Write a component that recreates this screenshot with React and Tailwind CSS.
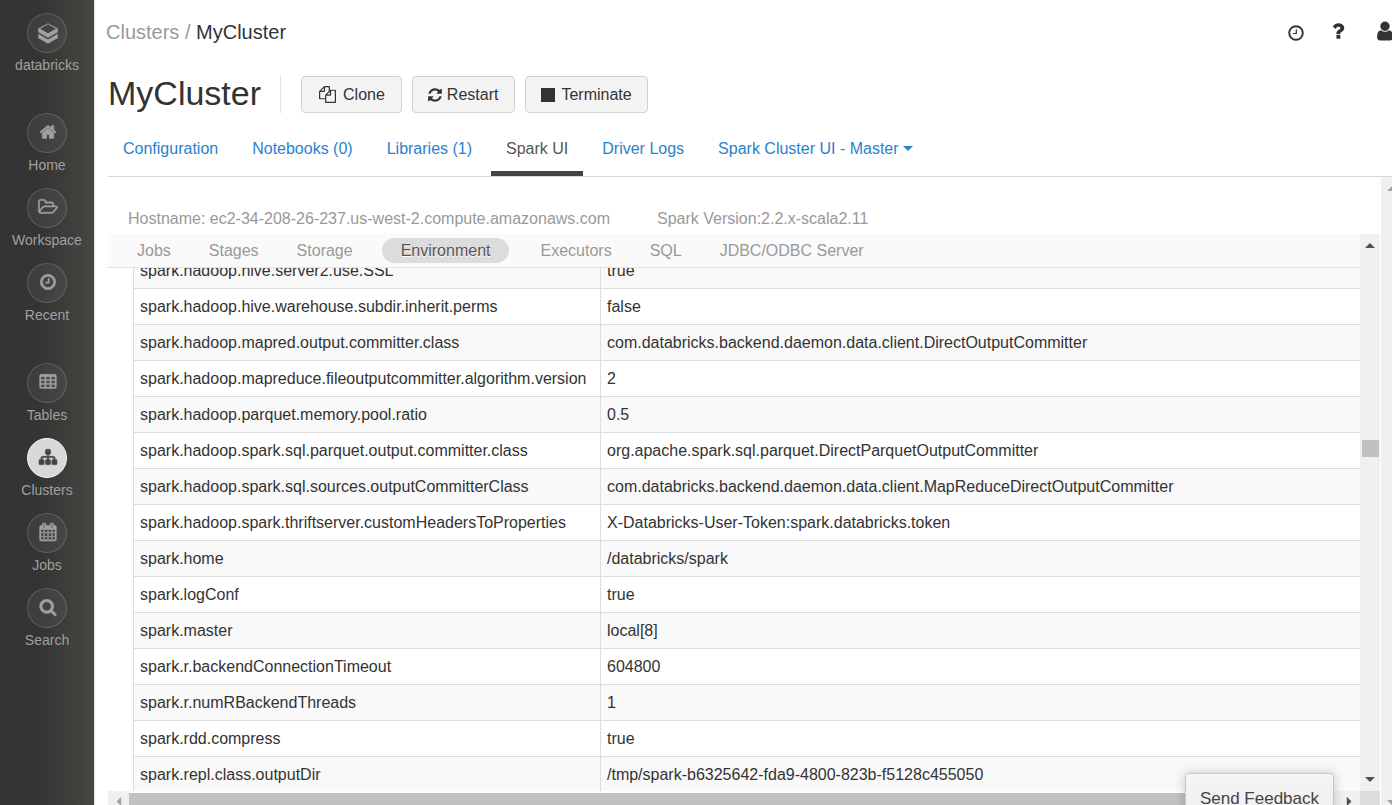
import React, { useState } from "react";

const ICONS = {
  home: "M1472 992v480q0 26-19 45t-45 19h-384v-384h-256v384h-384q-26 0-45-19t-19-45v-480q0-1 .5-3t.5-3l575-474 575 474q1 2 1 6zm223-69l-62 74q-8 9-21 11h-3q-13 0-21-7l-692-577-692 577q-12 8-24 7-13-2-21-11l-62-74q-8-10-7-23.5t11-21.5l719-599q32-26 76-26t76 26l244 204v-195q0-14 9-23t23-9h192q14 0 23 9t9 23v408l219 182q10 8 11 21.5t-7 23.5z",
  folder: "M1717 931q0-35-53-35h-1088q-40 0-85.5 21.5t-71.5 52.5l-294 363q-18 24-18 40 0 35 53 35h1088q40 0 86-22t71-53l294-363q18-22 18-39zm-1141-163h768v-160q0-40-28-68t-68-28h-576q-40 0-68-28t-28-68v-64q0-40-28-68t-68-28h-320q-40 0-68 28t-28 68v853l256-315q44-53 116-87.5t140-34.5zm1269 163q0 62-46 120l-295 363q-43 53-116 87.5t-140 34.5h-1088q-92 0-158-66t-66-158v-960q0-92 66-158t158-66h320q92 0 158 66t66 158v32h544q92 0 158 66t66 158v160h192q54 0 99 24.5t67 70.5q15 32 15 68z",
  clock: "M1024 544v448q0 14-9 23t-23 9h-320q-14 0-23-9t-9-23v-64q0-14 9-23t23-9h224v-352q0-14 9-23t23-9h64q14 0 23 9t9 23zm416 352q0-148-73-273t-198-198-273-73-273 73-198 198-73 273 73 273 198 198 273 73 273-73 198-198 73-273zm224 0q0 209-103 385.5t-279.5 279.5-385.5 103-385.5-103-279.5-279.5-103-385.5 103-385.5 279.5-279.5 385.5-103 385.5 103 279.5 279.5 103 385.5z",
  table: "M576 1376v-192q0-14-9-23t-23-9h-320q-14 0-23 9t-9 23v192q0 14 9 23t23 9h320q14 0 23-9t9-23zm0-384v-192q0-14-9-23t-23-9h-320q-14 0-23 9t-9 23v192q0 14 9 23t23 9h320q14 0 23-9t9-23zm512 384v-192q0-14-9-23t-23-9h-320q-14 0-23 9t-9 23v192q0 14 9 23t23 9h320q14 0 23-9t9-23zm-512-768v-192q0-14-9-23t-23-9h-320q-14 0-23 9t-9 23v192q0 14 9 23t23 9h320q14 0 23-9t9-23zm512 384v-192q0-14-9-23t-23-9h-320q-14 0-23 9t-9 23v192q0 14 9 23t23 9h320q14 0 23-9t9-23zm512 384v-192q0-14-9-23t-23-9h-320q-14 0-23 9t-9 23v192q0 14 9 23t23 9h320q14 0 23-9t9-23zm-512-768v-192q0-14-9-23t-23-9h-320q-14 0-23 9t-9 23v192q0 14 9 23t23 9h320q14 0 23-9t9-23zm512 384v-192q0-14-9-23t-23-9h-320q-14 0-23 9t-9 23v192q0 14 9 23t23 9h320q14 0 23-9t9-23zm0-384v-192q0-14-9-23t-23-9h-320q-14 0-23 9t-9 23v192q0 14 9 23t23 9h320q14 0 23-9t9-23zm128-320v1088q0 66-47 113t-113 47h-1344q-66 0-113-47t-47-113v-1088q0-66 47-113t113-47h1344q66 0 113 47t47 113z",
  sitemap: "M1792 1248v320q0 40-28 68t-68 28h-320q-40 0-68-28t-28-68v-320q0-40 28-68t68-28h96v-192h-512v192h96q40 0 68 28t28 68v320q0 40-28 68t-68 28h-320q-40 0-68-28t-28-68v-320q0-40 28-68t68-28h96v-192h-512v192h96q40 0 68 28t28 68v320q0 40-28 68t-68 28h-320q-40 0-68-28t-28-68v-320q0-40 28-68t68-28h96v-192q0-52 38-90t90-38h512v-192h-96q-40 0-68-28t-28-68v-320q0-40 28-68t68-28h320q40 0 68 28t28 68v320q0 40-28 68t-68 28h-96v192h512q52 0 90 38t38 90v192h96q40 0 68 28t28 68z",
  calendar: "M192 1664h288v-288h-288v288zm352 0h320v-288h-320v288zm-352-352h288v-320h-288v320zm352 0h320v-320h-320v320zm-352-384h288v-288h-288v288zm736 736h320v-288h-320v288zm-384-736h320v-288h-320v288zm768 736h288v-288h-288v288zm-384-352h320v-320h-320v320zm-352-864v-288q0-13-9.5-22.5t-22.5-9.5h-64q-13 0-22.5 9.5t-9.5 22.5v288q0 13 9.5 22.5t22.5 9.5h64q13 0 22.5-9.5t9.5-22.5zm736 864h288v-320h-288v320zm-384-384h320v-288h-320v288zm384 0h288v-288h-288v288zm32-480v-288q0-13-9.5-22.5t-22.5-9.5h-64q-13 0-22.5 9.5t-9.5 22.5v288q0 13 9.5 22.5t22.5 9.5h64q13 0 22.5-9.5t9.5-22.5zm384-64v1280q0 52-38 90t-90 38h-1408q-52 0-90-38t-38-90v-1280q0-52 38-90t90-38h128v-96q0-66 47-113t113-47h64q66 0 113 47t47 113v96h384v-96q0-66 47-113t113-47h64q66 0 113 47t47 113v96h128q52 0 90 38t38 90z",
  search: "M1216 832q0-185-131.5-316.5t-316.5-131.5-316.5 131.5-131.5 316.5 131.5 316.5 316.5 131.5 316.5-131.5 131.5-316.5zm512 832q0 52-38 90t-90 38q-54 0-90-38l-343-342q-179 124-399 124-143 0-273.5-55.5t-225-150-150-225-55.5-273.5 55.5-273.5 150-225 225-150 273.5-55.5 273.5 55.5 225 150 150 225 55.5 273.5q0 220-124 399l343 343q37 37 37 90z",
  copy: "M1696 384q40 0 68 28t28 68v1216q0 40-28 68t-68 28h-960q-40 0-68-28t-28-68v-288h-544q-40 0-68-28t-28-68v-672q0-40 20-88t48-76l408-408q28-28 76-48t88-20h416q40 0 68 28t28 68v328q68-40 128-40h416zm-544 213l-299 299h299v-299zm-640-384l-299 299h299v-299zm196 647l316-316v-416h-384v416q0 40-28 68t-68 28h-416v640h512v-256q0-40 20-88t48-76zm956 804v-1152h-384v416q0 40-28 68t-68 28h-416v640h896z",
  refresh: "M1639 1056q0 5-1 7-64 268-268 434.5t-478 166.5q-146 0-282.5-55t-243.5-157l-129 129q-19 19-45 19t-45-19-19-45v-448q0-26 19-45t45-19h448q26 0 45 19t19 45-19 45l-137 137q71 66 161 102t187 36q134 0 250-65t186-179q11-17 53-117 8-23 30-23h192q13 0 22.5 9.5t9.5 22.5zm25-800v448q0 26-19 45t-45 19h-448q-26 0-45-19t-19-45 19-45l138-138q-148-137-349-137-134 0-250 65t-186 179q-11 17-53 117-8 23-30 23h-199q-13 0-22.5-9.5t-9.5-22.5v-7q65-268 270-434.5t480-166.5q146 0 284 55.5t245 156.5l130-129q19-19 45-19t45 19 19 45z",
  question: "M1088 1256v240q0 16-12 28t-28 12h-240q-16 0-28-12t-12-28v-240q0-16 12-28t28-12h240q16 0 28 12t12 28zm316-600q0 54-15.5 101t-35 76.5-55 59.5-57.5 43.5-61 35.5q-41 23-68.5 65t-27.5 67q0 17-12 32.5t-28 15.5h-240q-15 0-25.5-18.5t-10.5-37.5v-45q0-83 65-156.5t143-108.5q59-27 84-56t25-76q0-42-46.5-74t-107.5-32q-65 0-108 29-35 25-107 115-13 16-31 16-12 0-25-8l-164-125q-13-10-15.5-25t5.5-28q160-266 464-266 80 0 161 31t146 83 106 127.5 41 158.5z",
  user: "M1536 1399q0 109-62.5 187t-150.5 78h-854q-88 0-150.5-78t-62.5-187q0-85 8.5-160.5t31.5-152 58.5-131 94-89 134.5-34.5q131 128 313 128t313-128q76 0 134.5 34.5t94 89 58.5 131 31.5 152 8.5 160.5zm-256-887q0 159-112.5 271.5t-271.5 112.5-271.5-112.5-112.5-271.5 112.5-271.5 271.5-112.5 271.5 112.5 112.5 271.5z",
};

function Icon({ name, className, weight = 0 }) {
  return (
    <svg
      viewBox="0 0 1792 1792"
      fill="currentColor"
      stroke="currentColor"
      strokeWidth={weight}
      aria-hidden="true"
      className={`shrink-0 overflow-visible ${className}`}
    >
      <path d={ICONS[name]} />
    </svg>
  );
}

function BricksLogo() {
  return (
    <svg viewBox="0 0 60 64" fill="currentColor" aria-hidden="true" className="w-5 h-[21px] ml-0.5">
      <path fillRule="evenodd" d="M0 17L30 1L60 17V28L30 45L0 28ZM6 17.5L30 31L54 17.5L30 4Z" />
      <path d="M0 33L30 50L60 33V46L30 63L0 46Z" />
    </svg>
  );
}

const navGroups = [
  [{ label: "databricks" }],
  [
    { label: "Home", icon: "home" },
    { label: "Workspace", icon: "folder" },
    { label: "Recent", icon: "clock" },
  ],
  [
    { label: "Tables", icon: "table" },
    { label: "Clusters", icon: "sitemap" },
    { label: "Jobs", icon: "calendar" },
    { label: "Search", icon: "search" },
  ],
];

const tabs = ["Configuration", "Notebooks (0)", "Libraries (1)", "Spark UI", "Driver Logs"];

const sparkTabs = ["Jobs", "Stages", "Storage", "Environment", "Executors", "SQL", "JDBC/ODBC Server"];

const properties = [
  ["spark.hadoop.hive.server2.use.SSL", "true"],
  ["spark.hadoop.hive.warehouse.subdir.inherit.perms", "false"],
  ["spark.hadoop.mapred.output.committer.class", "com.databricks.backend.daemon.data.client.DirectOutputCommitter"],
  ["spark.hadoop.mapreduce.fileoutputcommitter.algorithm.version", "2"],
  ["spark.hadoop.parquet.memory.pool.ratio", "0.5"],
  ["spark.hadoop.spark.sql.parquet.output.committer.class", "org.apache.spark.sql.parquet.DirectParquetOutputCommitter"],
  ["spark.hadoop.spark.sql.sources.outputCommitterClass", "com.databricks.backend.daemon.data.client.MapReduceDirectOutputCommitter"],
  ["spark.hadoop.spark.thriftserver.customHeadersToProperties", "X-Databricks-User-Token:spark.databricks.token"],
  ["spark.home", "/databricks/spark"],
  ["spark.logConf", "true"],
  ["spark.master", "local[8]"],
  ["spark.r.backendConnectionTimeout", "604800"],
  ["spark.r.numRBackendThreads", "1"],
  ["spark.rdd.compress", "true"],
  ["spark.repl.class.outputDir", "/tmp/spark-b6325642-fda9-4800-823b-f5128c455050"],
];

function Sidebar() {
  return (
    <aside className="w-[95px] shrink-0 flex flex-col gap-[25px] pt-[13px] bg-linear-to-r from-[#343434] from-40% to-[#464642] border-r border-[#e4e4e4]">
      {navGroups.map((group, i) => (
        <nav key={i} className="flex flex-col">
          {group.map((item) => {
            const isActive = item.label === "Clusters";
            return (
              <a key={item.label} href="#" className="flex flex-col items-center h-[75px] text-[#a0a09e]">
                <span
                  className={`w-10 h-10 rounded-full border flex items-center justify-center
                    ${isActive ? "bg-[#d8d8d6] border-[#f4f4f4] text-[#444]" : "bg-white/5 border-white/15"}`}
                >
                  {item.icon ? <Icon name={item.icon} weight={50} className="w-[18px] h-[18px] mb-0.5 ml-0.5" /> : <BricksLogo />}
                </span>
                <span className="mt-0.5 text-sm leading-5">{item.label}</span>
              </a>
            );
          })}
        </nav>
      ))}
    </aside>
  );
}

function Triangle({ className = "" }) {
  return (
    <svg viewBox="0 0 10 5" fill="currentColor" aria-hidden="true" className={`w-[10px] h-[5px] shrink-0 ${className}`}>
      <path d="M5 0L10 5H0Z" />
    </svg>
  );
}

function ActionButton({ children, className }) {
  return (
    <button className={`h-[37px] flex items-center rounded border border-[#d2d2d2] bg-[#f4f4f4] text-base text-[#333] ${className}`}>
      {children}
    </button>
  );
}

function EnvironmentFrame() {
  const [active, setActive] = useState("Environment");

  return (
    <div className="flex-1 min-h-0 flex flex-col mr-px">
      <div className="flex-1 min-h-0 flex">
        <div className="flex-1 min-w-0 flex flex-col">
          <nav className="h-[34px] shrink-0 flex items-center pl-[10px] bg-[#fafafa] border-b border-[#e5e5e5]">
            {sparkTabs.map((tab) => (
              <button
                key={tab}
                onClick={() => setActive(tab)}
                className={`h-[25px] px-[19px] rounded-full whitespace-nowrap
                  ${active === tab ? "ml-[10px] mr-3 bg-[#dcdcdc] text-[#555] text-shadow-[0_1px_0_#fff]" : "text-[#999]"}`}
              >
                {tab}
              </button>
            ))}
          </nav>

          <div className="flex-1 min-h-0 overflow-hidden pl-[25px]">
            {/* list is scrolled part way into the first row */}
            <table className="w-full -mt-[16px] border-collapse text-[#333]">
              <tbody>
                {properties.map(([name, value]) => (
                  <tr key={name} className="h-9 odd:bg-[#f9f9f9]">
                    <td className="w-[467px] px-[6px] border border-[#ddd] whitespace-nowrap">{name}</td>
                    <td className="px-[6px] border-y border-l border-[#ddd] whitespace-nowrap">{value}</td>
                  </tr>
                ))}
              </tbody>
            </table>
          </div>
        </div>

        <div className="w-5 shrink-0 flex flex-col items-center bg-[#f0f0f0] text-[#505050] py-[9px]">
          <Triangle />
          <div className="flex-[191]" />
          <div className="w-[17px] h-[17px] bg-[#c1c1c1]" />
          <div className="flex-[319]" />
          <Triangle className="rotate-180" />
        </div>
      </div>

      <div className="h-[14px] shrink-0 flex">
        <div className="w-[21px] flex items-center justify-center pt-[7px] bg-[#f0f0f0] text-[#a3a3a3]">
          <Triangle className="-rotate-90" />
        </div>
        <div className="flex-1 mt-0.5 bg-[#c1c1c1]" />
        <div className="w-[50px] flex items-center justify-end pr-1.5 pt-[7px] bg-[#f0f0f0] text-[#505050]">
          <Triangle className="rotate-90" />
        </div>
        <div className="w-5 bg-[#dcdcdc]" />
      </div>
    </div>
  );
}

export default function App() {
  const [activeTab, setActiveTab] = useState("Spark UI");

  return (
    <div className="relative h-screen flex overflow-hidden bg-white font-['Liberation_Sans',Arial,sans-serif] text-base">
      <Sidebar />

      <main className="flex-1 min-w-0 flex flex-col pl-[13px]">
        <header className="h-16 shrink-0 flex items-center justify-between text-xl">
          <div className="text-[#999] whitespace-nowrap -ml-0.5">
            <a href="#">Clusters</a> / <span className="text-[#333]">MyCluster</span>
          </div>
          <div className="flex items-center gap-[23px] -mr-1 text-[#333]">
            <button aria-label="History" className="pt-0.5">
              <svg viewBox="0 0 16 16" fill="none" stroke="currentColor" className="w-4 h-4" aria-hidden="true">
                <circle cx="8" cy="8" r="6.8" strokeWidth="1.9" />
                <path d="M8.3 4.2V8.5H5" strokeWidth="1.2" />
              </svg>
            </button>
            <button aria-label="Help" className="pb-0.5">
              <Icon name="question" className="w-[22px] h-[22px]" />
            </button>
            <button aria-label="Account" className="pb-0.5 pl-0.5">
              <Icon name="user" className="w-[22px] h-[22px]" />
            </button>
          </div>
        </header>

        <div className="shrink-0 flex items-center pt-[10px] pb-[7px]">
          <h1 className="h-[38px] flex items-center pr-[19px] mr-5 border-r border-[#e2e2e2] text-[34px] text-[#333]">MyCluster</h1>
          <div className="flex gap-[10px] pt-0.5">
            <ActionButton className="gap-[7px] pl-[17px] pr-4">
              <Icon name="copy" className="w-[17px] h-[17px]" /> Clone
            </ActionButton>
            <ActionButton className="gap-1 pl-[14px] pr-4">
              <Icon name="refresh" className="w-4 h-4" /> Restart
            </ActionButton>
            <ActionButton className="gap-1.5 px-[15px]">
              <span className="w-[14px] h-[14px] bg-[#333]" /> Terminate
            </ActionButton>
          </div>
        </div>

        <nav className="shrink-0 flex gap-1 border-b border-[#d8d8d8]">
          {tabs.map((tab) => (
            <button
              key={tab}
              onClick={() => setActiveTab(tab)}
              className={`h-14 pt-1.5 px-[15px] border-b-5 whitespace-nowrap
                ${activeTab === tab ? "border-[#444] text-[#555]" : "border-transparent text-[#2a82cd]"}`}
            >
              {tab}
            </button>
          ))}
          <button className="h-14 pt-1.5 px-[15px] border-b-5 border-transparent flex items-center gap-1 whitespace-nowrap text-[#2a82cd]">
            Spark Cluster UI - Master <Triangle className="rotate-180" />
          </button>
        </nav>

        <div className="flex-1 min-h-0 flex">
          <div className="flex-1 min-w-0 flex flex-col">
            <div className="h-[57px] shrink-0 flex items-end gap-[47px] pl-5 pb-[3px] text-[#999] whitespace-nowrap">
              <span>Hostname: ec2-34-208-26-237.us-west-2.compute.amazonaws.com</span>
              <span>Spark Version:2.2.x-scala2.11</span>
            </div>
            <EnvironmentFrame />
          </div>

          <div className="w-[11px] shrink-0 flex flex-col justify-between overflow-hidden pl-1.5 pt-[9px] bg-[#f0f0f0] text-[#a3a3a3]">
            <Triangle />
            <Triangle className="rotate-180" />
          </div>
        </div>
      </main>

      <button className="absolute right-[58px] -bottom-4 h-12 pt-1 px-[14px] rounded-[3px] border border-[#c8c8c8] bg-linear-to-b from-[#f5f5f5] to-[#eee] shadow-[0_0_12px_rgba(0,0,0,0.2)] text-[17px] text-[#444] whitespace-nowrap">
        Send Feedback
      </button>
    </div>
  );
}
